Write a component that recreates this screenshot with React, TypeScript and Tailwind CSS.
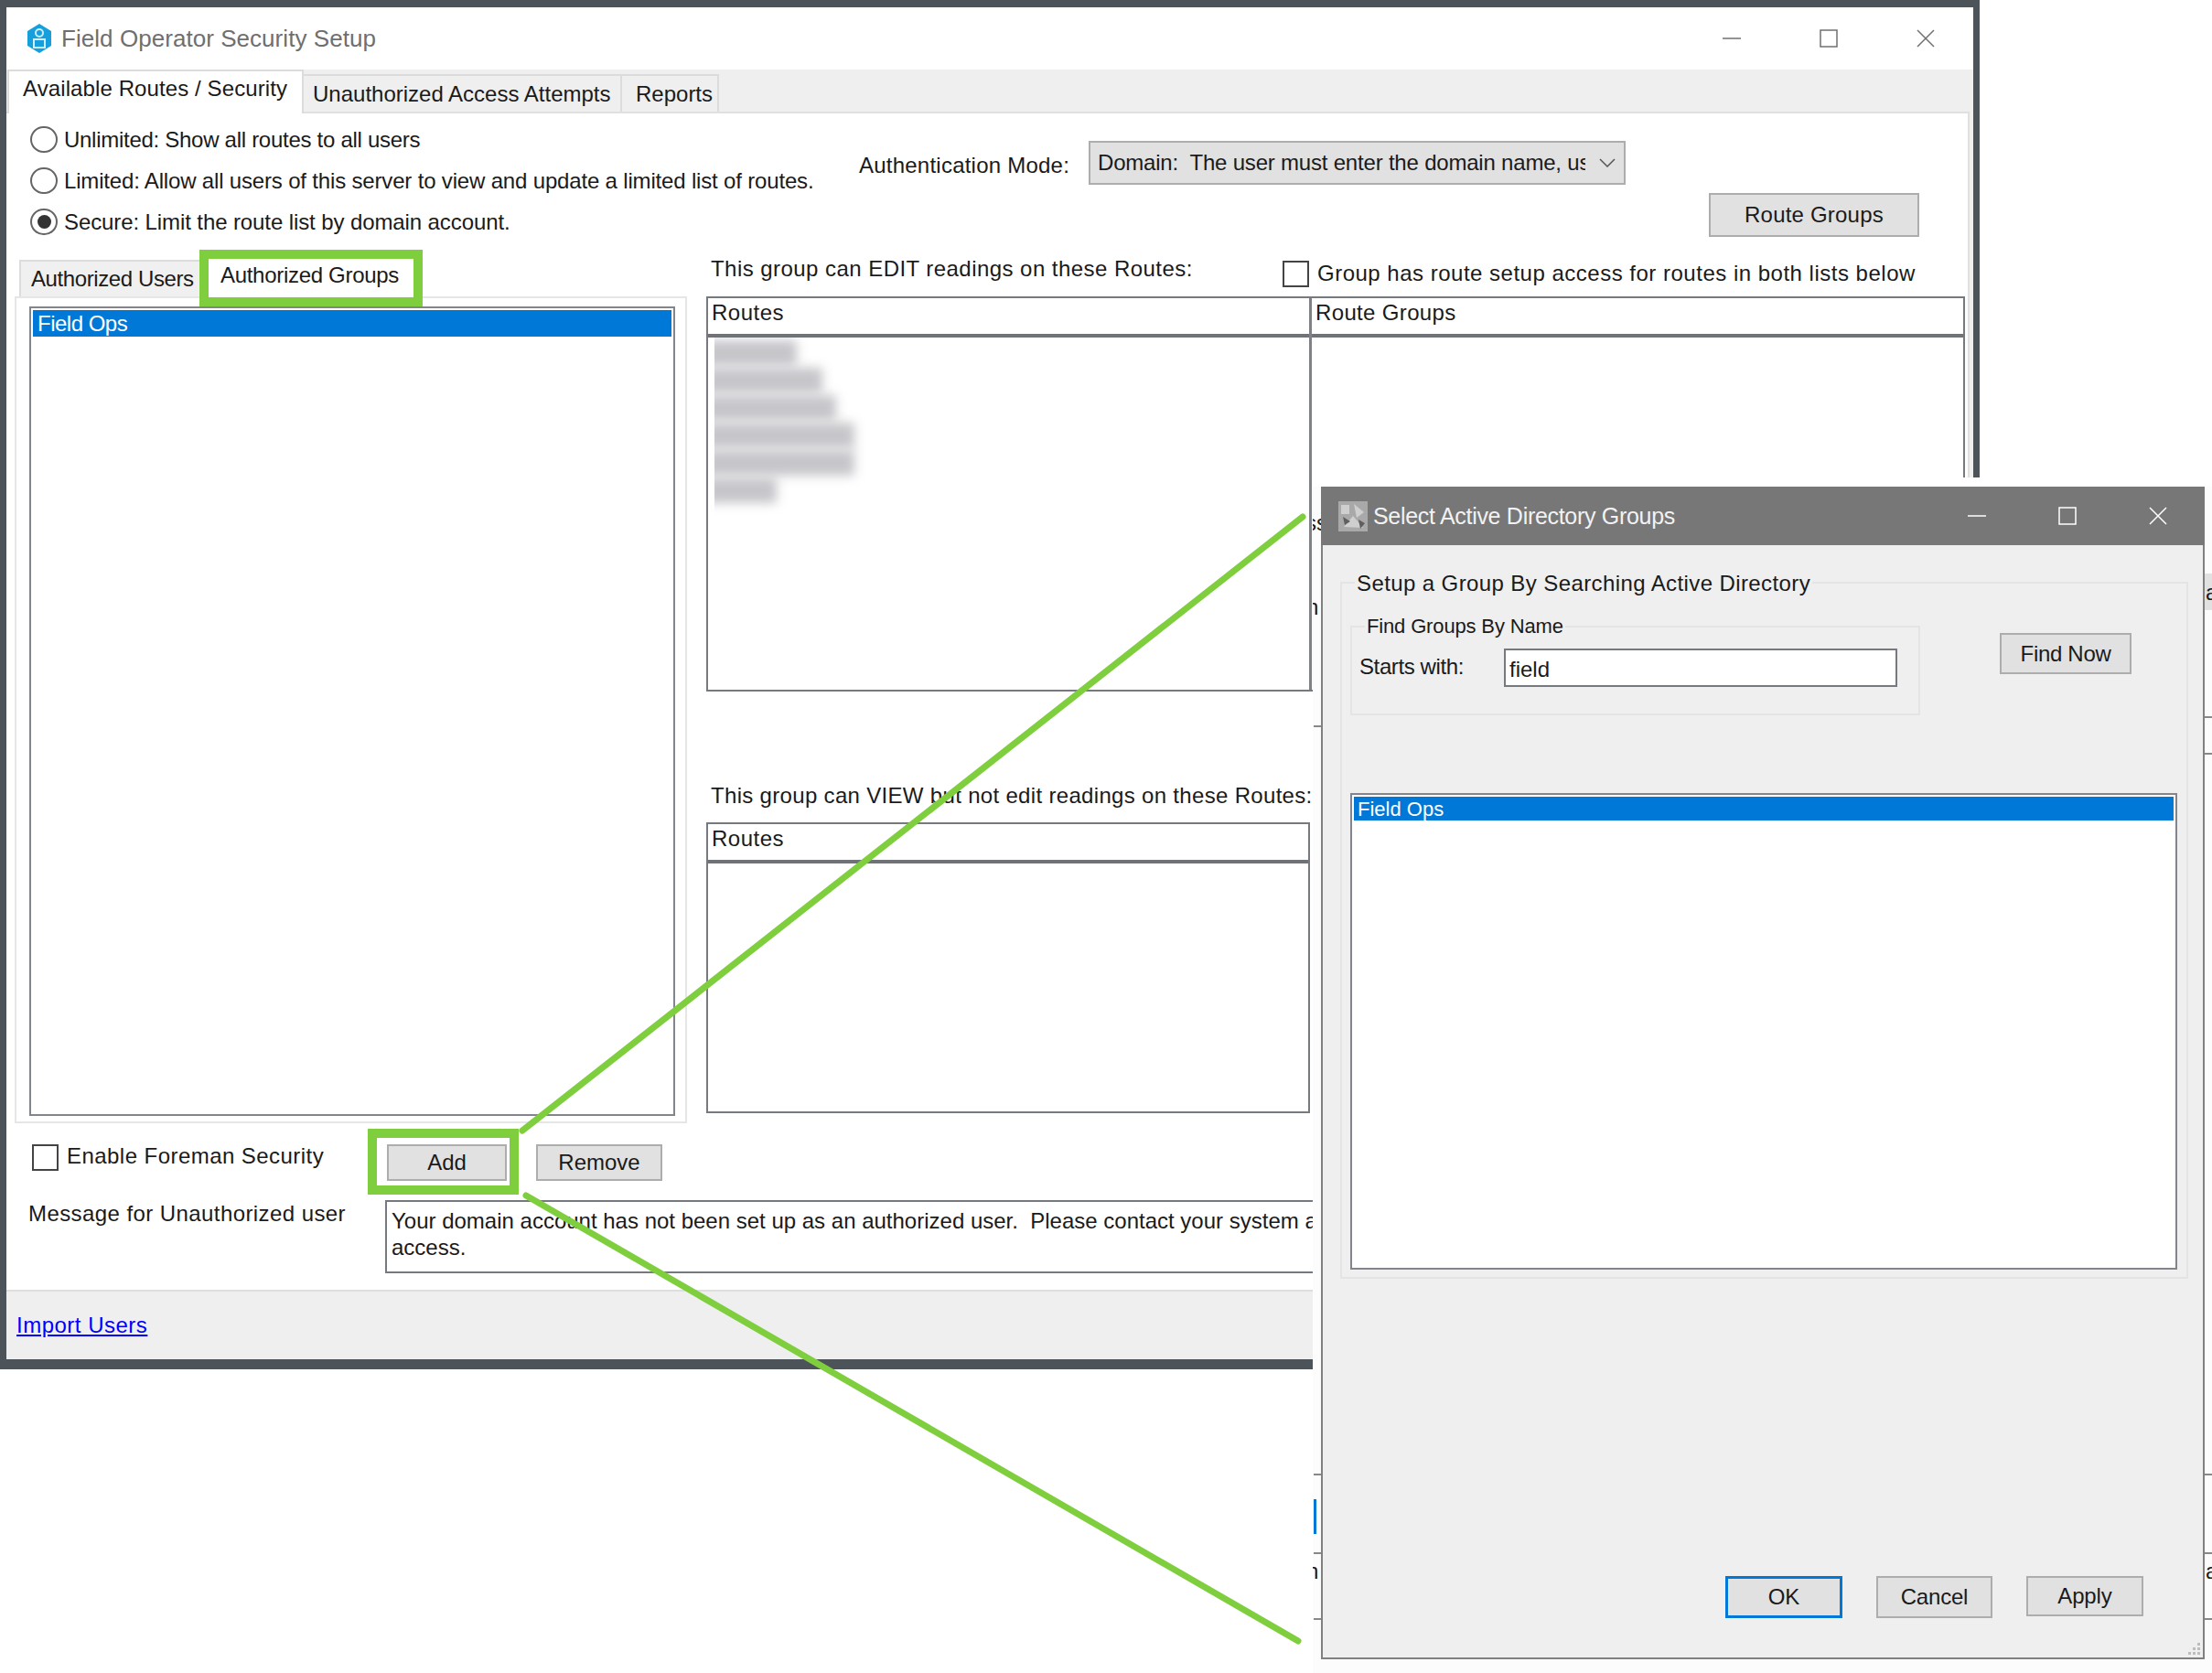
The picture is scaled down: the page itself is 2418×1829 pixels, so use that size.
import React from "react";

const routeBars = [
  { id: "a", w: "w-[100px]" },
  { id: "b", w: "w-[128px]" },
  { id: "c", w: "w-[143px]" },
  { id: "d", w: "w-[163px]" },
  { id: "e", w: "w-[163px]" },
  { id: "f", w: "w-[78px]" },
];

function WinControls({ color, gap }: { color: string; gap: string }) {
  return (
    <div className={`flex items-center ${gap}`}>
      <svg width="20" height="20" viewBox="0 0 20 20" fill="none" stroke={color} strokeWidth="1.5">
        <path d="M0 10H20" />
      </svg>
      <svg width="20" height="20" viewBox="0 0 20 20" fill="none" stroke={color} strokeWidth="1.5">
        <rect x="1" y="1" width="18" height="18" />
      </svg>
      <svg width="20" height="20" viewBox="0 0 20 20" fill="none" stroke={color} strokeWidth="1.5">
        <path d="M1 1L19 19M19 1L1 19" />
      </svg>
    </div>
  );
}

function Radio({ checked, label, className }: { checked?: boolean; label: string; className: string }) {
  return (
    <div className="flex h-[45px] items-center">
      <span className="flex h-[29px] w-[30px] shrink-0 items-center justify-center rounded-full border-2 border-[#666]">
        {checked && <span className="h-[15px] w-[15px] rounded-full bg-[#333]" />}
      </span>
      <span className={`ml-[7px] whitespace-nowrap ${className}`}>{label}</span>
    </div>
  );
}

function Check({ className }: { className?: string }) {
  return <span className={`block h-[29px] w-[29px] shrink-0 border-2 border-[#444] bg-white ${className ?? ""}`} />;
}

function Btn({ label, className }: { label: string; className: string }) {
  return (
    <div className={`flex shrink-0 items-center justify-center border-2 border-[#adadad] bg-[#e1e1e1] ${className}`}>
      {label}
    </div>
  );
}

function Column({ title, className, titleClass, children }: { title: string; className: string; titleClass: string; children?: React.ReactNode }) {
  return (
    <div className={`flex flex-col ${className}`}>
      <div className={`flex h-[43px] shrink-0 items-start border-b-4 border-[#6f7276] pl-[4px] pt-[4px] ${titleClass}`}>{title}</div>
      {children}
    </div>
  );
}

function MainWindow() {
  return (
    <div className="absolute left-0 top-0 flex h-[1497px] w-[2164px] flex-col border-x-[7px] border-b-[11px] border-t-8 border-[#4d5459] bg-[#efefef]">
      <div className="flex h-[68px] shrink-0 items-center justify-between bg-white pl-[20px] pr-[42px]">
        <div className="flex items-center">
          <svg width="32" height="32" viewBox="0 0 32 32">
            <path d="M16 0L29 8V24L16 32L3 24V8Z" fill="#159fdc" />
            <circle cx="16" cy="10" r="4" fill="none" stroke="#cdeefb" strokeWidth="2" />
            <rect x="10" y="17" width="12" height="9" fill="none" stroke="#cdeefb" strokeWidth="2" />
          </svg>
          <span className="ml-[8px] text-[26px] tracking-[0.05px] text-[#6f6f6f]">Field Operator Security Setup</span>
        </div>
        <WinControls color="#707070" gap="gap-[86px]" />
      </div>

      <div className="flex h-[46px] shrink-0 items-end pl-[1px]">
        <div className="relative z-10 -mb-[2px] flex h-[48px] w-[324px] items-start border-x-2 border-t-2 border-[#dcdcdc] bg-white pl-[15px] pt-[7px] tracking-[0.1px]">
          Available Routes / Security
        </div>
        <div className="flex h-[41px] w-[348px] items-center border-r-2 border-t-2 border-[#dcdcdc] pl-[10px]">
          Unauthorized Access Attempts
        </div>
        <div className="flex h-[41px] w-[106px] items-center border-r-2 border-t-2 border-[#dcdcdc] pl-[15px]">
          Reports
        </div>
      </div>

      <div className="mr-[4px] flex min-h-0 flex-1 flex-col border-r-2 border-t-2 border-[#e0e0e0] bg-white">
        <div className="flex h-[149px] shrink-0 pl-[26px] pt-[6px]">
          <div className="w-[906px] shrink-0">
            <Radio label="Unlimited: Show all routes to all users" className="tracking-[-0.28px]" />
            <Radio label="Limited: Allow all users of this server to view and update a limited list of routes." className="tracking-[-0.17px]" />
            <Radio checked label="Secure: Limit the route list by domain account." className="tracking-[-0.1px]" />
          </div>
          <div className="pt-[24px]">
            <div className="flex">
              <span className="mt-[15px] w-[251px] whitespace-nowrap tracking-[0.23px]">Authentication Mode:</span>
              <div className="flex h-[48px] w-[587px] items-center border-2 border-[#adadad] bg-[#e1e1e1] pl-[8px]">
                <span className="w-[533px] shrink-0 overflow-hidden whitespace-pre tracking-[-0.2px]">Domain:  The user must enter the domain name, us</span>
                <svg className="ml-[15px]" width="18" height="10" viewBox="0 0 18 10" fill="none" stroke="#555" strokeWidth="1.5">
                  <path d="M1 1L9 9L17 1" />
                </svg>
              </div>
            </div>
            <Btn label="Route Groups" className="ml-[929px] mt-[9px] h-[48px] w-[230px] tracking-[0.2px]" />
          </div>
        </div>

        <div className="flex h-[955px] shrink-0 pl-[9px]">
          <div className="flex w-[735px] shrink-0 flex-col">
            <div className="flex h-[51px] shrink-0 items-end pl-[5px]">
              <div className="flex h-[40px] w-[197px] items-center border-l-2 border-t-2 border-[#dcdcdc] bg-[#f0f0f0] pl-[11px]">
                <span className="whitespace-nowrap tracking-[-0.4px]">Authorized Users</span>
              </div>
              <div className="relative z-10 flex h-[62px] w-[244px] items-center self-start border-10 border-[#7fce3e] bg-white pb-[6px] pl-[13px]">
                <span className="whitespace-nowrap tracking-[-0.3px]">Authorized Groups</span>
              </div>
            </div>
            <div className="flex min-h-0 flex-1 border-2 border-[#e6e6e6] pb-[6px] pl-[14px] pr-[11px] pt-[9px]">
              <div className="flex-1 border-2 border-[#82868c] p-[2px]">
                <div className="flex h-[29px] items-center bg-[#0078d7] pl-[5px] tracking-[-0.5px] text-white">Field Ops</div>
              </div>
            </div>
          </div>

          <div className="ml-[21px] flex w-[1376px] shrink-0 flex-col">
            <div className="flex h-[51px] shrink-0">
              <span className="mt-[9px] w-[630px] whitespace-nowrap pl-[5px] tracking-[0.45px]">This group can EDIT readings on these Routes:</span>
              <Check className="mt-[12px]" />
              <span className="ml-[9px] mt-[14px] whitespace-nowrap tracking-[0.5px]">Group has route setup access for routes in both lists below</span>
            </div>
            <div className="flex h-[432px] shrink-0 border-2 border-[#76797d]">
              <Column title="Routes" titleClass="tracking-[0.5px]" className="w-[657px] shrink-0">
                <div className="ml-[7px] flex h-[200px] flex-col gap-[2px] overflow-hidden pt-[3px]">
                  {routeBars.map((bar) => (
                    <div key={bar.id} className={`-ml-[10px] h-[28px] shrink-0 bg-[#c6c6ca] blur-[6px] ${bar.w}`} />
                  ))}
                </div>
              </Column>
              <Column title="Route Groups" titleClass="tracking-[0.35px]" className="flex-1 border-l-[3px] border-[#7e8288]" />
            </div>
            <span className="mt-[102px] h-[24px] whitespace-nowrap pl-[5px] tracking-[0.32px]">This group can VIEW but not edit readings on these Routes:</span>
            <div className="mt-[17px] flex h-[318px] w-[660px] shrink-0 border-2 border-[#76797d]">
              <Column title="Routes" titleClass="tracking-[0.5px]" className="flex-1" />
            </div>
          </div>
        </div>

        <div className="mt-[6px] flex h-[72px] shrink-0 pl-[28px]">
          <div className="flex w-[367px] shrink-0">
            <Check className="mt-[17px]" />
            <span className="ml-[9px] mt-[18px] whitespace-nowrap tracking-[0.45px]">Enable Foreman Security</span>
          </div>
          <div className="h-[72px] w-[165px] shrink-0 border-10 border-[#7fce3e] bg-white pl-[11px] pt-[7px]">
            <Btn label="Add" className="h-[40px] w-[131px]" />
          </div>
          <Btn label="Remove" className="ml-[19px] mt-[17px] h-[40px] w-[138px]" />
        </div>

        <div className="mt-[6px] flex h-[80px] shrink-0">
          <span className="mt-[3px] w-[414px] shrink-0 whitespace-nowrap pl-[24px] tracking-[0.42px]">Message for Unauthorized user</span>
          <div className="flex-1 overflow-hidden border-2 border-[#76797d] pl-[5px] pt-[6px] leading-[29px]">
            <div className="whitespace-pre">Your domain account has not been set up as an authorized user.  Please contact your system a</div>
            <div>access.</div>
          </div>
        </div>
      </div>

      <div className="flex h-[76px] shrink-0 items-center border-t-2 border-[#dedede] pl-[11px]">
        <a className="tracking-[0.5px] text-[#0000ff] underline">Import Users</a>
      </div>
    </div>
  );
}

function Dialog() {
  return (
    <div className="absolute left-[1444px] top-[532px] flex h-[1282px] w-[966px] flex-col border-x-2 border-b-2 border-[#808080] bg-[#efefef]">
      <div className="-mx-[2px] flex h-[64px] shrink-0 items-center justify-between bg-[#777777] pl-[19px] pr-[41px]">
        <div className="flex items-center">
          <svg width="32" height="33" viewBox="0 0 32 33">
            <rect width="32" height="33" fill="#a9a9a9" />
            <path d="M3 4H12V14H3ZM17 3L28 12L20 18ZM6 28L16 16L27 29Z" fill="#cfcfcf" />
            <path d="M5 17L13 22L7 26ZM22 20L29 24L24 30Z" fill="#5f5f5f" />
          </svg>
          <span className="ml-[6px] text-[25px] tracking-[-0.3px] text-[#f2f2f2]">Select Active Directory Groups</span>
        </div>
        <WinControls color="#ffffff" gap="gap-[79px]" />
      </div>

      <div className="relative ml-[19px] mt-[40px] h-[762px] w-[927px] shrink-0 border-2 border-[#e4e4e4] pl-[9px] pt-[46px]">
        <span className="absolute -top-[12px] left-[14px] whitespace-nowrap bg-[#efefef] px-[2px] tracking-[0.4px]">Setup a Group By Searching Active Directory</span>
        <div className="flex">
          <div className="relative flex h-[98px] w-[623px] shrink-0 items-start border-2 border-[#e4e4e4] pl-[8px] pt-[23px]">
            <span className="absolute -top-[13px] left-[14px] whitespace-nowrap bg-[#efefef] px-[2px] text-[22px] tracking-[-0.15px]">Find Groups By Name</span>
            <span className="mt-[8px] w-[158px] shrink-0 whitespace-nowrap tracking-[-0.4px]">Starts with:</span>
            <div className="h-[42px] w-[430px] border-2 border-[#76797d] bg-white pl-[4px] pt-[9px]">field</div>
          </div>
          <Btn label="Find Now" className="ml-[87px] mt-[8px] h-[45px] w-[144px] tracking-[-0.3px]" />
        </div>
        <div className="mt-[85px] h-[521px] w-[904px] border-2 border-[#82868c] bg-white p-[2px]">
          <div className="flex h-[26px] items-center bg-[#0078d7] pl-[4px] pt-[2px] text-[22px] text-white">Field Ops</div>
        </div>
      </div>

      <div className="mr-[65px] mt-[325px] flex justify-end gap-[37px]">
        <div className="flex h-[46px] w-[128px] items-center justify-center border-[3px] border-[#0078d7] bg-[#e1e1e1]">OK</div>
        <Btn label="Cancel" className="h-[46px] w-[127px] tracking-[-0.2px]" />
        <Btn label="Apply" className="h-[44px] w-[128px] tracking-[-0.1px]" />
      </div>

      <svg className="absolute bottom-[2px] right-[2px]" width="16" height="16" viewBox="0 0 16 16" fill="#bdbdbd">
        <rect x="12" y="2" width="3" height="3" />
        <rect x="12" y="7" width="3" height="3" />
        <rect x="7" y="7" width="3" height="3" />
        <rect x="12" y="12" width="3" height="3" />
        <rect x="7" y="12" width="3" height="3" />
        <rect x="2" y="12" width="3" height="3" />
      </svg>
    </div>
  );
}

// bits of other windows that show round the pasted dialog
function Fragments() {
  return (
    <div className="absolute left-[1435px] top-[522px] h-[1307px] w-[983px] overflow-hidden bg-[#fcfcfc]">
      <div className="absolute left-0 top-0 h-[10px] w-full bg-white" />
      <span className="absolute left-[-8px] top-[38px]">ss</span>
      <span className="absolute left-[-7px] top-[130px]">n</span>
      <div className="absolute left-[1px] top-[271px] h-[2px] w-[10px] bg-[#888]" />
      <div className="absolute left-[1px] top-[1089px] h-[2px] w-[10px] bg-[#888]" />
      <div className="absolute left-[1px] top-[1117px] h-[38px] w-[3px] bg-[#0078d7]" />
      <div className="absolute left-[1px] top-[1175px] h-[2px] w-[10px] bg-[#888]" />
      <span className="absolute left-[-7px] top-[1184px]">n</span>
      <div className="absolute left-[1px] top-[1247px] h-[2px] w-[10px] bg-[#888]" />
      <div className="absolute left-[975px] top-[105px] h-[40px] w-[8px] bg-[#e1e1e1]" />
      <span className="absolute left-[976px] top-[114px]">a</span>
      <div className="absolute left-[975px] top-[261px] h-[2px] w-[8px] bg-[#888]" />
      <div className="absolute left-[975px] top-[301px] h-[2px] w-[8px] bg-[#888]" />
      <div className="absolute left-[975px] top-[1089px] h-[2px] w-[8px] bg-[#888]" />
      <div className="absolute left-[975px] top-[1175px] h-[2px] w-[8px] bg-[#888]" />
      <span className="absolute left-[976px] top-[1184px]">a</span>
      <div className="absolute left-[975px] top-[1247px] h-[2px] w-[8px] bg-[#888]" />
    </div>
  );
}

export default function App() {
  return (
    <div className="relative h-[1829px] w-[2418px] overflow-hidden bg-white font-['Liberation_Sans',Arial,sans-serif] text-[24px] leading-[24px] text-[#1a1a1a]">
      <MainWindow />
      <Fragments />
      <Dialog />
      <svg className="absolute left-0 top-0" width="2418" height="1829" fill="none" stroke="#7fce3e" strokeWidth="7" strokeLinecap="round">
        <path d="M571 1236L1424 565" />
        <path d="M575 1307L1419 1794" />
      </svg>
    </div>
  );
}
